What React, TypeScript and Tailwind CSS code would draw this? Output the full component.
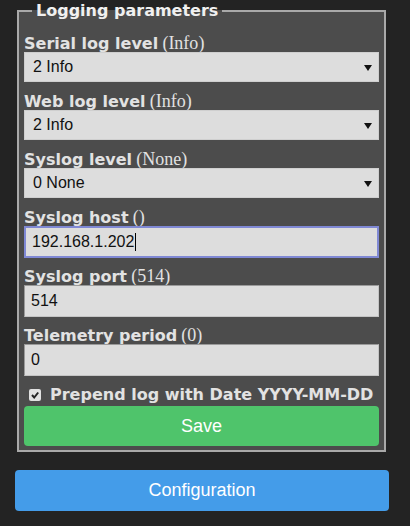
import React from "react";

const bold = { fontFamily: '"DejaVu Sans", Verdana, sans-serif' };
const serif = { fontFamily: '"Liberation Serif", "Times New Roman", serif' };
const arial = { fontFamily: '"Liberation Sans", Arial, sans-serif' };

function Label({ title, hint }: { title: string; hint: string }) {
  return (
    <div className="h-[17px] leading-[17px] text-[#e2e2e2] whitespace-nowrap">
      <span className="font-bold text-[16px]" style={bold}>{title}</span>{" "}
      <span className="text-[18px]" style={serif}>({hint})</span>
    </div>
  );
}

function Select({ value }: { value: string }) {
  return (
    <div className="relative h-[30px] bg-[#dddddd] border border-[#cfcfcf] flex items-center pl-[8px] text-[16px] text-[#111]" style={arial}>
      {value}
      <svg className="absolute right-[6px] top-[12px]" width="8" height="6" viewBox="0 0 8 6">
        <path d="M0 0 H8 L4 6 Z" fill="#111" />
      </svg>
    </div>
  );
}

function Field({ value, focused, caret }: { value: string; focused?: boolean; caret?: boolean }) {
  return (
    <div
      className={
        "h-[32px] bg-[#dddddd] flex items-center pl-[6px] text-[16px] text-[#111] " +
        (focused ? "border-2 border-[#7f88d4]" : "border border-[#c4c4c4] border-t-[#9a9a9a] border-l-[#9a9a9a]")
      }
      style={arial}
    >
      {value}
      {caret && <span className="inline-block w-px h-[18px] bg-black ml-px" />}
    </div>
  );
}

export default function App() {
  return (
    <div className="w-[410px] h-[526px] bg-[#232323] pl-[15px] pr-[21px] pt-[1px]">
      <fieldset className="ml-[2px] mr-[3px] border-2 border-[#a9a9a9] bg-[#4c4c4c] px-[5px] pb-[4px]">
        <legend className="ml-[8px] px-[4px] text-[16px] font-bold text-[#f0f0f0] leading-[20px]" style={bold}>
          Logging parameters
        </legend>
        <div className="flex flex-col pt-[14px]">
          <Label title="Serial log level" hint="Info" />
          <Select value="2 Info" />
          <div className="h-[11px]" />
          <Label title="Web log level" hint="Info" />
          <Select value="2 Info" />
          <div className="h-[11px]" />
          <Label title="Syslog level" hint="None" />
          <Select value="0 None" />
          <div className="h-[11px]" />
          <Label title="Syslog host" hint="" />
          <Field value="192.168.1.202" focused caret />
          <div className="h-[10px]" />
          <Label title="Syslog port" hint="514" />
          <Field value="514" />
          <div className="h-[10px]" />
          <Label title="Telemetry period" hint="0" />
          <Field value="0" />
          <div className="h-[10px]" />
          <div className="flex items-center h-[17px] pl-[5px] gap-[9px]">
            <span className="w-[12px] h-[12px] bg-[#e0e0e0] rounded-[2px] flex items-center justify-center">
              <svg width="10" height="10" viewBox="0 0 10 10">
                <path d="M2 5 L4.2 7.5 L8.2 2.5" stroke="#222" strokeWidth="2" fill="none" />
              </svg>
            </span>
            <span className="font-bold text-[16px] text-[#e2e2e2]" style={bold}>Prepend log with Date YYYY-MM-DD</span>
          </div>
          <button className="mt-[3px] h-[40px] w-full rounded-[4px] bg-[#4fc46b] text-white text-[18px]" style={arial}>
            Save
          </button>
        </div>
      </fieldset>
      <button className="mt-[18px] h-[41px] w-full rounded-[4px] bg-[#449ce9] text-white text-[18px]" style={arial}>
        Configuration
      </button>
    </div>
  );
}
